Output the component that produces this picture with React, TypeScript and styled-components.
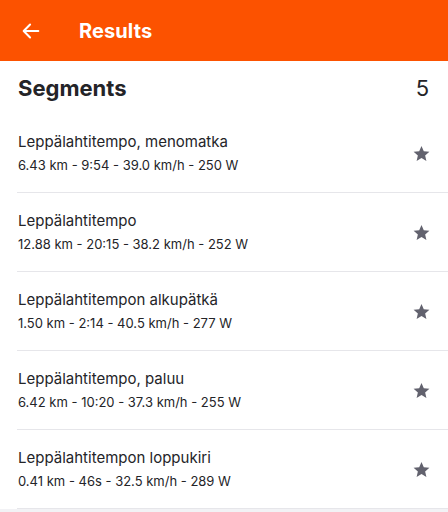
import React from "react";
import styled, { createGlobalStyle } from "styled-components";

const GlobalStyle = createGlobalStyle`
  body {
    margin: 0;
    background: #ffffff;
    font-family: Inter, "Noto Sans", sans-serif;
  }
`;

const Page = styled.div`
  width: 448px;
  height: 512px;
  overflow: hidden;
  background: #f2f2f5;
`;

const TopBar = styled.header`
  height: 61px;
  background: #fc5200;
  display: flex;
  align-items: center;
  padding-left: 20px;
  gap: 37px;
  color: #fff;
  box-sizing: border-box;
`;

const Title = styled.h1`
  margin: 0;
  font-size: 20px;
  font-weight: 700;
  letter-spacing: 0.1px;
`;

const Panel = styled.section`
  background: #fff;
`;

const SectionHead = styled.div`
  display: flex;
  justify-content: space-between;
  align-items: center;
  height: 53px;
  padding: 0 19px 0 18px;
  color: #242428;
`;

const SectionTitle = styled.h2`
  margin: 0;
  font-size: 22px;
  font-weight: 700;
`;

const Count = styled.span`
  font-size: 22px;
  font-weight: 400;
`;

const List = styled.ul`
  list-style: none;
  margin: 0;
  padding: 0 0 0 17px;
`;

const Row = styled.li`
  display: flex;
  align-items: center;
  justify-content: space-between;
  height: 78px;
  padding: 0 17px 0 1px;
  border-bottom: 1px solid #e6e6ea;
`;

const Info = styled.div`
  display: flex;
  flex-direction: column;
  gap: 6px;
  color: #242428;
`;

const Name = styled.span`
  font-size: 15px;
  line-height: 18px;
`;

const Stats = styled.span`
  font-size: 13px;
  line-height: 16px;
`;

const StarIcon = () => (
  <svg width="19" height="19" viewBox="0 0 24 24" aria-hidden>
    <path
      fill="#62626e"
      d="M12 2.5l2.9 6.6 7.1.6-5.4 4.7 1.6 7-6.2-3.7-6.2 3.7 1.6-7L2 9.7l7.1-.6z"
    />
  </svg>
);

const BackIcon = () => (
  <svg width="22" height="22" viewBox="0 0 24 24" aria-hidden>
    <path
      d="M20 12H4.5M11 5l-7 7 7 7"
      fill="none"
      stroke="#fff"
      strokeWidth="2.2"
      strokeLinecap="round"
      strokeLinejoin="round"
    />
  </svg>
);

const segments = [
  { name: "Leppälahtitempo, menomatka", stats: "6.43 km - 9:54 - 39.0 km/h - 250 W" },
  { name: "Leppälahtitempo", stats: "12.88 km - 20:15 - 38.2 km/h - 252 W" },
  { name: "Leppälahtitempon alkupätkä", stats: "1.50 km - 2:14 - 40.5 km/h - 277 W" },
  { name: "Leppälahtitempo, paluu", stats: "6.42 km - 10:20 - 37.3 km/h - 255 W" },
  { name: "Leppälahtitempon loppukiri", stats: "0.41 km - 46s - 32.5 km/h - 289 W" },
];

export default function App() {
  return (
    <Page>
      <GlobalStyle />
      <TopBar>
        <BackIcon />
        <Title>Results</Title>
      </TopBar>
      <Panel>
        <SectionHead>
          <SectionTitle>Segments</SectionTitle>
          <Count>{segments.length}</Count>
        </SectionHead>
        <List>
          {segments.map((s) => (
            <Row key={s.name}>
              <Info>
                <Name>{s.name}</Name>
                <Stats>{s.stats}</Stats>
              </Info>
              <StarIcon />
            </Row>
          ))}
        </List>
      </Panel>
    </Page>
  );
}
